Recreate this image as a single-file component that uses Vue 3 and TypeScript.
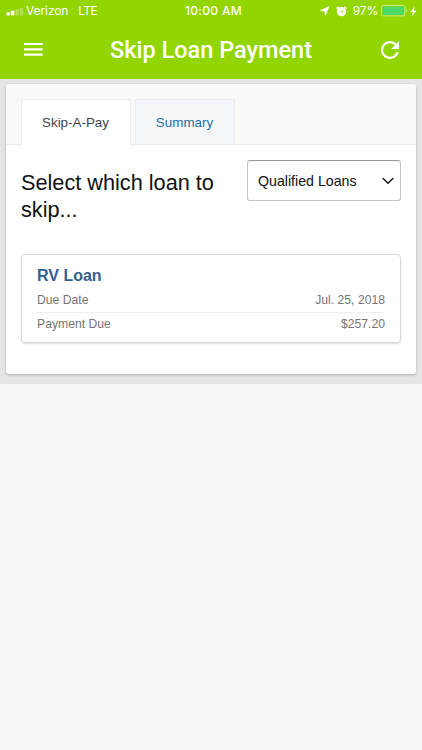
<script setup lang="ts">
import { ref } from 'vue';

interface Row {
  label: string;
  value: string;
}

interface Loan {
  name: string;
  rows: Row[];
}

const tabs = ['Skip-A-Pay', 'Summary'];
const activeTab = ref(tabs[0]);

const loans: Loan[] = [
  {
    name: 'RV Loan',
    rows: [
      { label: 'Due Date', value: 'Jul. 25, 2018' },
      { label: 'Payment Due', value: '$257.20' },
    ],
  },
];
</script>

<template>
  <div class="screen">
    <header class="header">
      <div class="status">
        <div class="status-left">
          <svg class="signal" width="18" height="8" viewBox="0 0 18 8" fill="#fff">
            <rect x="0.3" y="4.2" width="3.6" height="3.3" rx="0.8" />
            <rect x="4.8" y="2.8" width="3.6" height="4.7" rx="0.8" />
            <rect x="9.5" y="1.3" width="3.4" height="6.2" rx="0.8" opacity="0.3" />
            <rect x="14" y="0" width="3.2" height="7.5" rx="0.8" opacity="0.3" />
          </svg>
          <span class="carrier">Verizon</span>
          <span class="network">LTE</span>
        </div>
        <span class="time">10:00 AM</span>
        <div class="status-right">
          <svg class="location" width="11" height="10" viewBox="0 0 11 10" fill="#fff">
            <path d="M10.6 0 L6.4 10 L5.3 5.5 L0.4 4.6 Z" />
          </svg>
          <svg class="alarm" width="11" height="11" viewBox="0 0 11 11">
            <circle cx="5.5" cy="5.6" r="4.7" fill="#fff" />
            <path d="M1 2 L2.2 1.1 M10 2 L8.8 1.1" stroke="#fff" stroke-width="1.4" stroke-linecap="round" />
            <path d="M5.6 6.2 L4.2 5.2 M5.6 6.2 L7.3 4" fill="none" stroke="#93d500" stroke-width="0.9" />
          </svg>
          <span class="percent">97%</span>
          <svg class="battery" width="27" height="12" viewBox="0 0 27 12">
            <rect x="0.5" y="0.5" width="23.4" height="10.4" rx="1.8" fill="none" stroke="#fff" stroke-opacity="0.5" />
            <rect x="1.6" y="1.5" width="21.2" height="8.4" rx="0.9" fill="#4cd864" />
            <path d="M25 4 Q26.3 4.4 26.3 5.7 T25 7.4 Z" fill="#fff" opacity="0.5" />
          </svg>
          <svg class="bolt" width="7" height="11" viewBox="0 0 7 11" fill="#fff">
            <path d="M4.7 0.2 L0.4 6 H3 L2 10.6 L6.6 4.5 H3.9 Z" />
          </svg>
        </div>
      </div>
      <div class="toolbar">
        <button class="icon-button" aria-label="Menu">
          <svg width="19" height="13" viewBox="0 0 19 13" fill="#fff">
            <path d="M0 0H18.6V2.1H0ZM0 5.3H18.6V7.4H0ZM0 10.6H18.6V12.7H0Z" />
          </svg>
        </button>
        <h1 class="title">Skip Loan Payment</h1>
        <button class="icon-button" aria-label="Refresh">
          <svg width="18" height="18" viewBox="4 4 16 16" fill="#fff">
            <path d="M17.65 6.35C16.2 4.9 14.21 4 12 4c-4.42 0-7.99 3.58-7.99 8s3.57 8 7.99 8c3.73 0 6.84-2.55 7.73-6h-2.08c-.82 2.33-3.04 4-5.65 4-3.31 0-6-2.69-6-6s2.69-6 6-6c1.66 0 3.14.69 4.22 1.78L13 11h7V4l-2.35 2.35z" />
          </svg>
        </button>
      </div>
    </header>

    <main class="content">
      <section class="panel">
        <nav class="tabs">
          <button
            v-for="tab in tabs"
            :key="tab"
            class="tab"
            :class="{ active: tab === activeTab }"
            @click="activeTab = tab"
          >
            {{ tab }}
          </button>
        </nav>
        <div class="panel-body">
          <div class="prompt">
            <h2 class="prompt-text">Select which loan to skip...</h2>
            <button class="select">
              <span>Qualified Loans</span>
              <svg width="12" height="8" viewBox="0 0 12 8" fill="none" stroke="#111" stroke-width="1.3">
                <path d="M0.7 1 L6 6.3 L11.3 1" />
              </svg>
            </button>
          </div>
          <article v-for="loan in loans" :key="loan.name" class="loan">
            <h3 class="loan-name">{{ loan.name }}</h3>
            <div v-for="row in loan.rows" :key="row.label" class="loan-row">
              <span>{{ row.label }}</span>
              <span>{{ row.value }}</span>
            </div>
          </article>
        </div>
      </section>
    </main>
  </div>
</template>

<style>
body {
  background: #f7f7f7;
}
</style>

<style scoped>
.screen {
  min-height: 750px;
  background: #f7f7f7;
  font-family: "Liberation Sans", Arial, sans-serif;
}

.screen * {
  box-sizing: border-box;
}

button {
  border: 0;
  padding: 0;
  background: none;
  font-family: inherit;
}

h1, h2, h3 {
  margin: 0;
  font-weight: 400;
}

.header {
  height: 79px;
  background: #93d500;
  color: #fff;
}

.status {
  display: grid;
  grid-template-columns: 1fr auto 1fr;
  height: 22px;
  padding: 0 5px 0 6px;
  align-items: center;
  font-family: Inter, sans-serif;
  font-size: 12px;
  line-height: 22px;
}

.status-left, .status-right {
  display: flex;
  align-items: center;
}

.status-right {
  justify-content: flex-end;
}

.signal {
  margin: 1px 2px 0 0;
}

.carrier {
  letter-spacing: -0.1px;
}

.network {
  margin-left: 10px;
  letter-spacing: -0.6px;
}

.time {
  padding-left: 4px;
  font-weight: 500;
  letter-spacing: 0.3px;
}

.alarm {
  margin-left: 6px;
}

.percent {
  margin-left: 6px;
  letter-spacing: -0.2px;
}

.battery {
  margin-left: 3px;
}

.bolt {
  margin-left: 2px;
}

.toolbar {
  display: flex;
  justify-content: space-between;
  align-items: center;
  height: 55px;
  padding: 0 23px 0 24px;
}

.icon-button {
  display: flex;
}

.title {
  margin-right: 2px;
  padding-top: 2px;
  font-family: Roboto, sans-serif;
  font-size: 23.5px;
  font-weight: 500;
  line-height: 53px;
}

.content {
  height: 305px;
  padding: 5px 6px 10px;
  background: #e5e5e5;
}

.panel {
  height: 290px;
  border-radius: 3px;
  background: #fff;
  box-shadow: 0 1px 3px rgba(0, 0, 0, 0.25);
}

.tabs {
  display: flex;
  gap: 4px;
  height: 61px;
  padding: 15px 15px 0;
  border-bottom: 1px solid #eaebec;
  border-radius: 3px 3px 0 0;
  background: #f9f9f9;
}

.tab {
  width: 100px;
  height: 45px;
  padding-right: 1px;
  border: 1px solid #eaecee;
  border-bottom: 0;
  background: #f4f6f9;
  color: #1f6f9f;
  font-size: 13.4px;
}

.tab.active {
  width: 110px;
  height: 46px;
  background: #fff;
  color: #40444a;
}

.panel-body {
  padding: 15px 15px 0;
}

.prompt {
  display: flex;
  justify-content: space-between;
  height: 94px;
}

.prompt-text {
  width: 205px;
  padding-top: 10px;
  color: #111;
  font-size: 21.7px;
  line-height: 26.5px;
}

.select {
  display: flex;
  justify-content: space-between;
  align-items: center;
  width: 154px;
  height: 41px;
  padding: 0 6px 0 10px;
  border: 1px solid #c4c4c4;
  border-top-color: #999;
  border-radius: 3px;
  color: #111;
  font-size: 14.2px;
}

.loan {
  height: 89px;
  padding: 10px 15px 0;
  border: 1px solid #d7d7d7;
  border-radius: 4px;
  box-shadow: 0 1px 2px rgba(0, 0, 0, 0.14);
}

.loan-name {
  height: 24px;
  color: #326092;
  font-size: 16px;
  font-weight: 700;
  line-height: 22px;
}

.loan-row {
  display: flex;
  justify-content: space-between;
  height: 23px;
  color: #757575;
  font-size: 12.2px;
  line-height: 23px;
}

.loan-row + .loan-row {
  border-top: 1px solid #f0f0f0;
}
</style>
